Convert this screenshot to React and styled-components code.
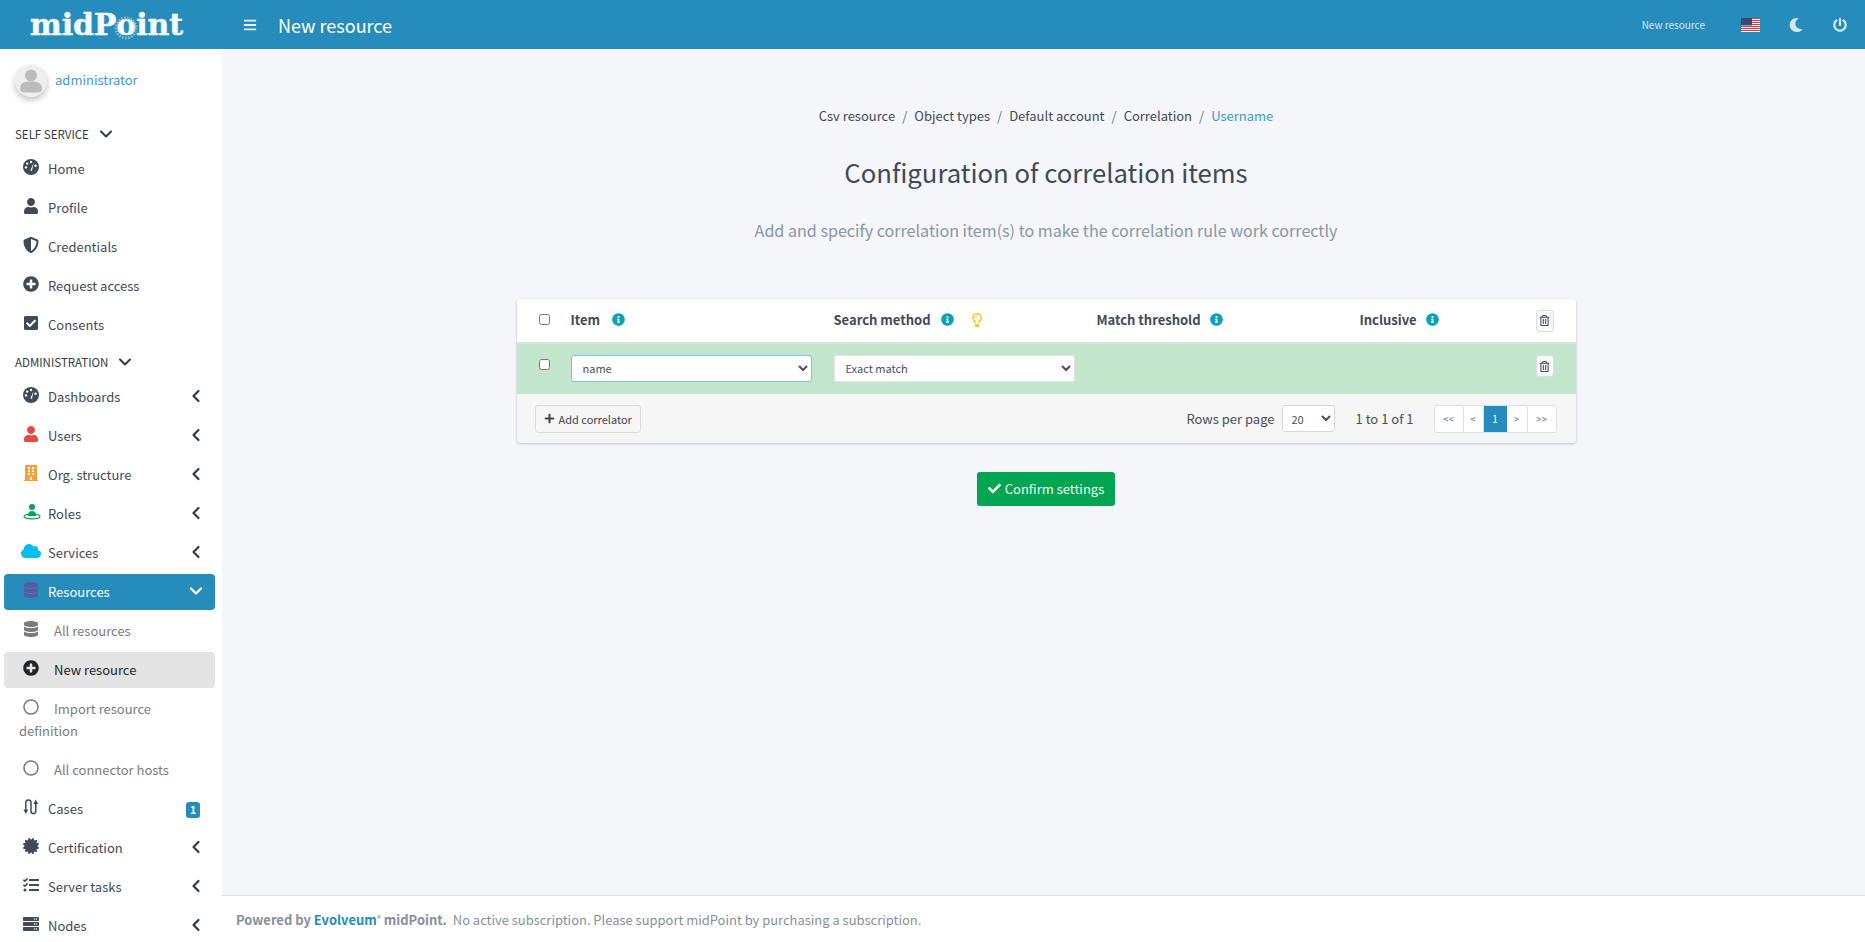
import React from 'react';
import styled, { createGlobalStyle } from 'styled-components';
import {
  FaUser, FaShieldAlt, FaPlusCircle, FaCheckSquare, FaBuilding, FaCloud, FaDatabase,
  FaRegCircle, FaCertificate, FaTasks, FaServer, FaBars, FaMoon, FaPowerOff, FaCheck, FaPlus,
  FaInfoCircle, FaRegLightbulb, FaRegTrashAlt,
} from 'react-icons/fa';
import { ChevronLeft, ChevronDown } from 'lucide-react';

const GlobalStyle = createGlobalStyle`
  html, body { margin: 0; padding: 0; height: 100%; overflow: hidden; }
  body {
    font-family: "Noto Sans CJK SC", "Noto Sans", "Liberation Sans", sans-serif;
    font-size: 13px;
    color: #343a40;
    background: #f4f6f9;
  }
  * { box-sizing: border-box; }
`;

const Page = styled.div`
  display: flex;
  flex-direction: column;
  height: 942px;
  overflow: hidden;
`;

const TopBar = styled.header`
  flex: 0 0 49px;
  display: flex;
  align-items: center;
  background: #268cbb;
  color: #fff;
`;

const LogoBox = styled.div`
  width: 222px;
  padding-left: 30px;
  display: flex;
  align-items: center;
`;

const LogoText = styled.span`
  font-family: "DejaVu Serif", serif;
  font-weight: 700;
  font-size: 30px;
  line-height: 49px;
  letter-spacing: -0.1px;
  color: #f4fafd;
  white-space: nowrap;
  -webkit-text-stroke: 0.5px #f4fafd;
`;

const LogoO = styled.span`
  position: relative;
  display: inline-block;
  svg {
    position: absolute;
    left: 50%;
    top: 50%;
    margin: -9px 0 0 -12px;
    z-index: 0;
  }
`;

const MenuButton = styled.span`
  display: flex;
  font-size: 14px;
  margin: 0 21px;
  color: #e3f1f7;
`;

const PageName = styled.div`
  font-size: 18px;
  line-height: 26px;
`;

const TopRight = styled.div`
  margin-left: auto;
  display: flex;
  align-items: center;
  color: #d4e8f1;
`;

const TopLabel = styled.span`
  font-size: 10px;
  margin-right: 36px;
`;

const TopIcon = styled.span`
  display: flex;
  font-size: 14px;
  margin-left: ${(p) => p.$gap}px;
`;

const Body = styled.div`
  flex: 1;
  display: flex;
  min-height: 0;
`;

const Sidebar = styled.aside`
  flex: 0 0 222px;
  background: #fff;
  overflow: hidden;
  padding: 0 7px 0 4px;
`;

const UserPanel = styled.div`
  display: flex;
  align-items: flex-start;
  height: 69px;
  padding: 16px 0 0 11px;
`;

const Avatar = styled.span`
  width: 32px;
  height: 32px;
  border-radius: 50%;
  background: #eeeeee;
  box-shadow: 0 3px 6px rgba(0, 0, 0, 0.25);
  display: flex;
  overflow: hidden;
`;

const UserName = styled.a`
  margin-left: 8px;
  font-size: 13px;
  line-height: 30px;
  color: #3c9bd0;
`;

const SectionLabel = styled.div`
  display: flex;
  align-items: center;
  height: 33px;
  padding: 0 0 1px 11px;
  font-size: 11.5px;
  color: #343a40;
  svg { margin-left: 7px; }
`;

const NavItem = styled.a`
  display: block;
  position: relative;
  height: ${(p) => (p.$tall ? '58px' : '36px')};
  margin-bottom: 3px;
  padding: 7px 16px 7px 15px;
  line-height: 22px;
  font-size: 13px;
  border-radius: 4px;
  color: ${(p) => (p.$active ? '#fff' : p.$current ? '#212529' : p.$sub ? '#7b7b7b' : '#3f4a56')};
  background: ${(p) => (p.$active ? '#268cbb' : p.$current ? '#e4e4e4' : 'transparent')};
`;

const NavIcon = styled.span`
  display: inline-block;
  width: 16px;
  height: 16px;
  margin-left: 4px;
  margin-right: ${(p) => (p.$sub ? '15px' : '9px')};
  vertical-align: -1px;
  color: ${(p) => p.$color || 'inherit'};
  font-size: ${(p) => p.$size || 16}px;
  line-height: 16px;
  svg {
    display: block;
    margin: ${(p) => (16 - (p.$size || 16)) / 2}px;
    overflow: visible;
  }
`;

const NavEnd = styled.span`
  position: absolute;
  right: 9px;
  top: 7px;
  display: flex;
  color: ${(p) => (p.$active ? '#fff' : '#343a40')};
`;

const Badge = styled.span`
  position: absolute;
  right: 15px;
  top: 11px;
  width: 14px;
  height: 16px;
  border-radius: 3px;
  background: #268cbb;
  color: #fff;
  font-size: 10.5px;
  font-weight: 700;
  line-height: 16px;
  text-align: center;
`;

const Main = styled.main`
  flex: 1;
  min-width: 0;
  display: flex;
  flex-direction: column;
`;

const Content = styled.div`
  flex: 1;
  display: flex;
  flex-direction: column;
  align-items: center;
  padding: 56px 0 0 5px;
`;

const Crumbs = styled.nav`
  display: flex;
  font-size: 13px;
  line-height: 22px;
  color: #3f4a56;
`;

const Crumb = styled.span`
  color: ${(p) => (p.$current ? '#3c9bd0' : '#3f4a56')};
`;

const CrumbSep = styled.span`
  padding: 0 7px;
  color: #6c757d;
`;

const Title = styled.h2`
  margin: 28px 0 0;
  font-size: 25.7px;
  font-weight: 400;
  line-height: 34px;
  color: #3f4a56;
`;

const SubTitle = styled.p`
  margin: 28px 0 0;
  font-size: 16.1px;
  font-weight: 400;
  line-height: 26px;
  color: #8a96a3;
`;

const Card = styled.section`
  width: 1059px;
  margin-top: 56px;
  border-radius: 4px;
  background: #fff;
  box-shadow: 0 0 1px rgba(0, 0, 0, 0.125), 0 1px 3px rgba(0, 0, 0, 0.2);
  overflow: hidden;
`;

const Row = styled.div`
  display: grid;
  grid-template-columns: 54px 263px 263px 263px 1fr 40px;
  height: ${(p) => p.$h}px;
  background: ${(p) => p.$bg || '#fff'};
  border-bottom: ${(p) => (p.$head ? '2px solid #dee2e6' : '0')};
`;

const Cell = styled.div`
  display: flex;
  align-items: ${(p) => (p.$top ? 'flex-start' : 'center')};
  padding-top: ${(p) => p.$pt || 0}px;
  padding-bottom: ${(p) => p.$pb || 0}px;
`;

const Check = styled.input.attrs({ type: 'checkbox' })`
  width: 11px;
  height: 11px;
  margin: 0 0 0 22px;
`;

const HeadText = styled.span`
  font-weight: 700;
  font-size: 13px;
  color: #3f4a56;
`;

const Info = styled.span`
  display: flex;
  margin-left: ${(p) => p.$gap || 10}px;
  font-size: 13px;
  color: #0aa2b8;
`;

const Bulb = styled.span`
  display: flex;
  margin-left: 16px;
  font-size: 14px;
  color: #ffc107;
`;

const Field = styled.select`
  width: 241px;
  height: 27px;
  padding: 0 7px 2px;
  border: 1px solid ${(p) => (p.$focus ? '#80bdff' : '#e4e4e4')};
  border-radius: 3px;
  background: #fff;
  font-family: inherit;
  font-size: 11px;
  color: #495057;
`;

const TrashButton = styled.span`
  width: 18px;
  height: 22px;
  display: flex;
  align-items: center;
  justify-content: center;
  border: 1px solid #dddddd;
  border-radius: 3px;
  background: #f8f9fa;
  font-size: 11px;
  color: #3f4a56;
`;

const CardFoot = styled.div`
  display: flex;
  align-items: center;
  height: 49px;
  padding: 0 19px 0 18px;
  background: #f6f6f6;
`;

const AddButton = styled.span`
  display: flex;
  align-items: center;
  height: 28px;
  padding: 0 8px;
  border: 1px solid #dddddd;
  border-radius: 3px;
  font-size: 11px;
  color: #444;
  svg { margin-right: 4px; font-size: 11px; }
`;

const RowsLabel = styled.span`
  margin-left: auto;
  font-size: 13px;
  color: #495057;
`;

const SizeSelect = styled.select`
  width: 53px;
  height: 27px;
  margin-left: 7px;
  padding: 0 5px;
  border: 1px solid #d5d8db;
  border-radius: 3px;
  background: #fff;
  font-family: inherit;
  font-size: 11px;
  color: #495057;
`;

const RangeText = styled.span`
  margin: 0 20px 0 21px;
  font-size: 13px;
  color: #495057;
`;

const Pager = styled.div`
  display: flex;
  height: 28px;
  border: 1px solid #dee2e6;
  border-radius: 3px;
  background: #fff;
`;

const PageCell = styled.span`
  width: ${(p) => p.$w}px;
  display: flex;
  align-items: center;
  justify-content: center;
  font-size: 10px;
  color: ${(p) => (p.$on ? '#fff' : '#6c757d')};
  background: ${(p) => (p.$on ? '#268cbb' : 'transparent')};
  border-right: ${(p) => (p.$last || p.$on ? '0' : '1px solid #dee2e6')};
`;

const ConfirmButton = styled.span`
  display: flex;
  align-items: center;
  margin-top: 29px;
  height: 34px;
  padding: 0 11px 1px;
  border-radius: 3px;
  background: #00a651;
  color: #f1fbf5;
  font-size: 13px;
  svg { margin-right: 4px; font-size: 13px; }
`;

const Footer = styled.footer`
  flex: 0 0 47px;
  display: flex;
  align-items: center;
  padding: 1px 0 0 14px;
  background: #fff;
  border-top: 1px solid #dee2e6;
  font-size: 12.95px;
  color: #869099;
`;

const Strong = styled.strong`
  font-weight: 700;
  margin-right: 6px;
`;

const FooterLink = styled.a`
  color: #268cbb;
`;

const Sup = styled.span`
  font-size: 9px;
  vertical-align: 3px;
  font-weight: 400;
`;

// the small drawings that the icon packs do not have
const GaugeIcon = () => (
  <svg width="16" height="16" viewBox="0 0 16 16">
    <circle cx="8" cy="8" r="8" fill="currentColor" />
    <circle cx="8" cy="3" r="1.2" fill="#fff" />
    <circle cx="4.2" cy="4.6" r="1.2" fill="#fff" />
    <circle cx="3" cy="8.4" r="1.2" fill="#fff" />
    <circle cx="12.6" cy="6.8" r="1.2" fill="#fff" />
    <path d="M10.8 3.8 L7.4 11.2 L8.9 12 Z" fill="#fff" />
  </svg>
);

const AvatarFigure = () => (
  <svg width="32" height="32" viewBox="0 0 32 32" fill="#bcbcbc">
    <circle cx="16" cy="10.5" r="6" />
    <path d="M5 24 C5 18 9 16.5 16 16.5 C23 16.5 27 18 27 24 C27 26.5 25 27.5 22 27.5 L10 27.5 C7 27.5 5 26.5 5 24 Z" />
  </svg>
);

const RolesIcon = () => (
  <svg width="18" height="16" viewBox="0 0 18 16" fill="currentColor">
    <circle cx="9" cy="3" r="3" />
    <path d="M5 11 C5 8 7 7 9 7 C11 7 13 8 13 11 L13 12 L5 12 Z" />
    <ellipse cx="9" cy="12.5" rx="8" ry="2.4" fill="none" stroke="currentColor" strokeWidth="1.2" />
  </svg>
);

const CasesIcon = () => (
  <svg width="16" height="16" viewBox="0 0 16 16" fill="none" stroke="currentColor" strokeWidth="1.5">
    <path d="M2.8 12 V3.6 A2.6 2.6 0 0 1 8 3.6 V12.2 A2.4 2.4 0 0 0 12.8 12.2 V4" />
    <path d="M0.4 10.5 L2.8 15 L5.2 10.5 Z" fill="currentColor" stroke="none" />
    <path d="M10.4 5 L12.8 0.6 L15.2 5 Z" fill="currentColor" stroke="none" />
  </svg>
);

const FlagIcon = () => (
  <svg width="19" height="14" viewBox="0 0 19 14">
    <rect width="19" height="14" fill="#fff" />
    {[0, 2, 4, 6, 8, 10, 12].map((y) => (
      <rect key={y} y={y} width="19" height="1.1" fill="#c8414f" />
    ))}
    <rect width="11" height="7.5" fill="#3a4a78" />
  </svg>
);

const LogoGear = () => (
  <svg width="24" height="24" viewBox="0 0 24 24" fill="none" stroke="#8fb8cc" strokeWidth="3" strokeDasharray="1.6 1.4">
    <circle cx="12" cy="12" r="10" />
  </svg>
);

const Angle = ({ open }) => (
  <NavEnd $active={open}>
    {open ? <ChevronDown size={20} strokeWidth={2.6} /> : <ChevronLeft size={20} strokeWidth={2.6} />}
  </NavEnd>
);

const selfService = [
  { label: 'Home', icon: <GaugeIcon /> },
  { label: 'Profile', icon: <FaUser /> },
  { label: 'Credentials', icon: <FaShieldAlt /> },
  { label: 'Request access', icon: <FaPlusCircle /> },
  { label: 'Consents', icon: <FaCheckSquare /> },
];

const administration = [
  { label: 'Dashboards', icon: <GaugeIcon />, more: true },
  { label: 'Users', icon: <FaUser />, color: '#e9483f', more: true },
  { label: 'Org. structure', icon: <FaBuilding />, color: '#fda136', more: true },
  { label: 'Roles', icon: <RolesIcon />, color: '#00a651', more: true },
  { label: 'Services', icon: <FaCloud />, color: '#00bdf2', size: 20, more: true },
  { label: 'Resources', icon: <FaDatabase />, color: '#5a5a9e', active: true },
  { label: 'All resources', icon: <FaDatabase />, color: '#7b7b7b', sub: true },
  { label: 'New resource', icon: <FaPlusCircle />, color: '#212529', sub: true, current: true },
  { label: 'Import resource definition', icon: <FaRegCircle />, sub: true, tall: true },
  { label: 'All connector hosts', icon: <FaRegCircle />, sub: true },
  { label: 'Cases', icon: <CasesIcon />, badge: 1 },
  { label: 'Certification', icon: <FaCertificate />, more: true },
  { label: 'Server tasks', icon: <FaTasks />, more: true },
  { label: 'Nodes', icon: <FaServer />, more: true },
];

const pages = [['<<', 29], ['<', 20], ['1', 23], ['>', 21], ['>>', 28]];

const renderNav = (item) => (
  <NavItem key={item.label} $active={item.active} $current={item.current} $sub={item.sub} $tall={item.tall}>
    <NavIcon $color={item.color} $sub={item.sub} $size={item.size}>{item.icon}</NavIcon>
    {item.label}
    {item.more && <Angle />}
    {item.active && <Angle open />}
    {item.badge && <Badge>{item.badge}</Badge>}
  </NavItem>
);

const App = () => (
  <Page>
    <GlobalStyle />
    <TopBar>
      <LogoBox>
        <LogoText>
          midP
          <LogoO><LogoGear />o</LogoO>
          int
        </LogoText>
      </LogoBox>
      <MenuButton><FaBars /></MenuButton>
      <PageName>New resource</PageName>
      <TopRight>
        <TopLabel>New resource</TopLabel>
        <FlagIcon />
        <TopIcon $gap={29}><FaMoon /></TopIcon>
        <TopIcon $gap={30}><FaPowerOff /></TopIcon>
        <TopIcon $gap={18} />
      </TopRight>
    </TopBar>
    <Body>
      <Sidebar>
        <UserPanel>
          <Avatar><AvatarFigure /></Avatar>
          <UserName>administrator</UserName>
        </UserPanel>
        <SectionLabel>SELF SERVICE <ChevronDown size={20} strokeWidth={2.4} /></SectionLabel>
        {selfService.map(renderNav)}
        <SectionLabel>ADMINISTRATION <ChevronDown size={20} strokeWidth={2.4} /></SectionLabel>
        {administration.map(renderNav)}
      </Sidebar>
      <Main>
        <Content>
          <Crumbs>
            <Crumb>Csv resource</Crumb><CrumbSep>/</CrumbSep>
            <Crumb>Object types</Crumb><CrumbSep>/</CrumbSep>
            <Crumb>Default account</Crumb><CrumbSep>/</CrumbSep>
            <Crumb>Correlation</Crumb><CrumbSep>/</CrumbSep>
            <Crumb $current>Username</Crumb>
          </Crumbs>
          <Title>Configuration of correlation items</Title>
          <SubTitle>Add and specify correlation item(s) to make the correlation rule work correctly</SubTitle>
          <Card>
            <Row $h={45} $head>
              <Cell $pb={3}><Check /></Cell>
              <Cell $pb={2}><HeadText>Item</HeadText><Info $gap={12}><FaInfoCircle /></Info></Cell>
              <Cell $pb={2}><HeadText>Search method</HeadText><Info><FaInfoCircle /></Info><Bulb><FaRegLightbulb /></Bulb></Cell>
              <Cell $pb={2}><HeadText>Match threshold</HeadText><Info $gap={9}><FaInfoCircle /></Info></Cell>
              <Cell $pb={2}><HeadText>Inclusive</HeadText><Info $gap={9}><FaInfoCircle /></Info></Cell>
              <Cell><TrashButton><FaRegTrashAlt /></TrashButton></Cell>
            </Row>
            <Row $h={50} $bg="#c1e6cc">
              <Cell $top $pt={15}><Check /></Cell>
              <Cell $top $pt={11}>
                <Field $focus defaultValue="name"><option>name</option></Field>
              </Cell>
              <Cell $top $pt={11}>
                <Field defaultValue="Exact match"><option>Exact match</option></Field>
              </Cell>
              <Cell />
              <Cell />
              <Cell $top $pt={11}><TrashButton><FaRegTrashAlt /></TrashButton></Cell>
            </Row>
            <CardFoot>
              <AddButton><FaPlus />Add correlator</AddButton>
              <RowsLabel>Rows per page</RowsLabel>
              <SizeSelect defaultValue="20"><option>20</option><option>50</option></SizeSelect>
              <RangeText>1 to 1 of 1</RangeText>
              <Pager>
                {pages.map(([label, w], i) => (
                  <PageCell key={label} $w={w} $on={label === '1'} $last={i === pages.length - 1}>{label}</PageCell>
                ))}
              </Pager>
            </CardFoot>
          </Card>
          <ConfirmButton><FaCheck />Confirm settings</ConfirmButton>
        </Content>
        <Footer>
          <Strong>Powered by <FooterLink>Evolveum</FooterLink><Sup>®</Sup> midPoint.</Strong>
          No active subscription. Please support midPoint by purchasing a subscription.
        </Footer>
      </Main>
    </Body>
  </Page>
);

export default App;
